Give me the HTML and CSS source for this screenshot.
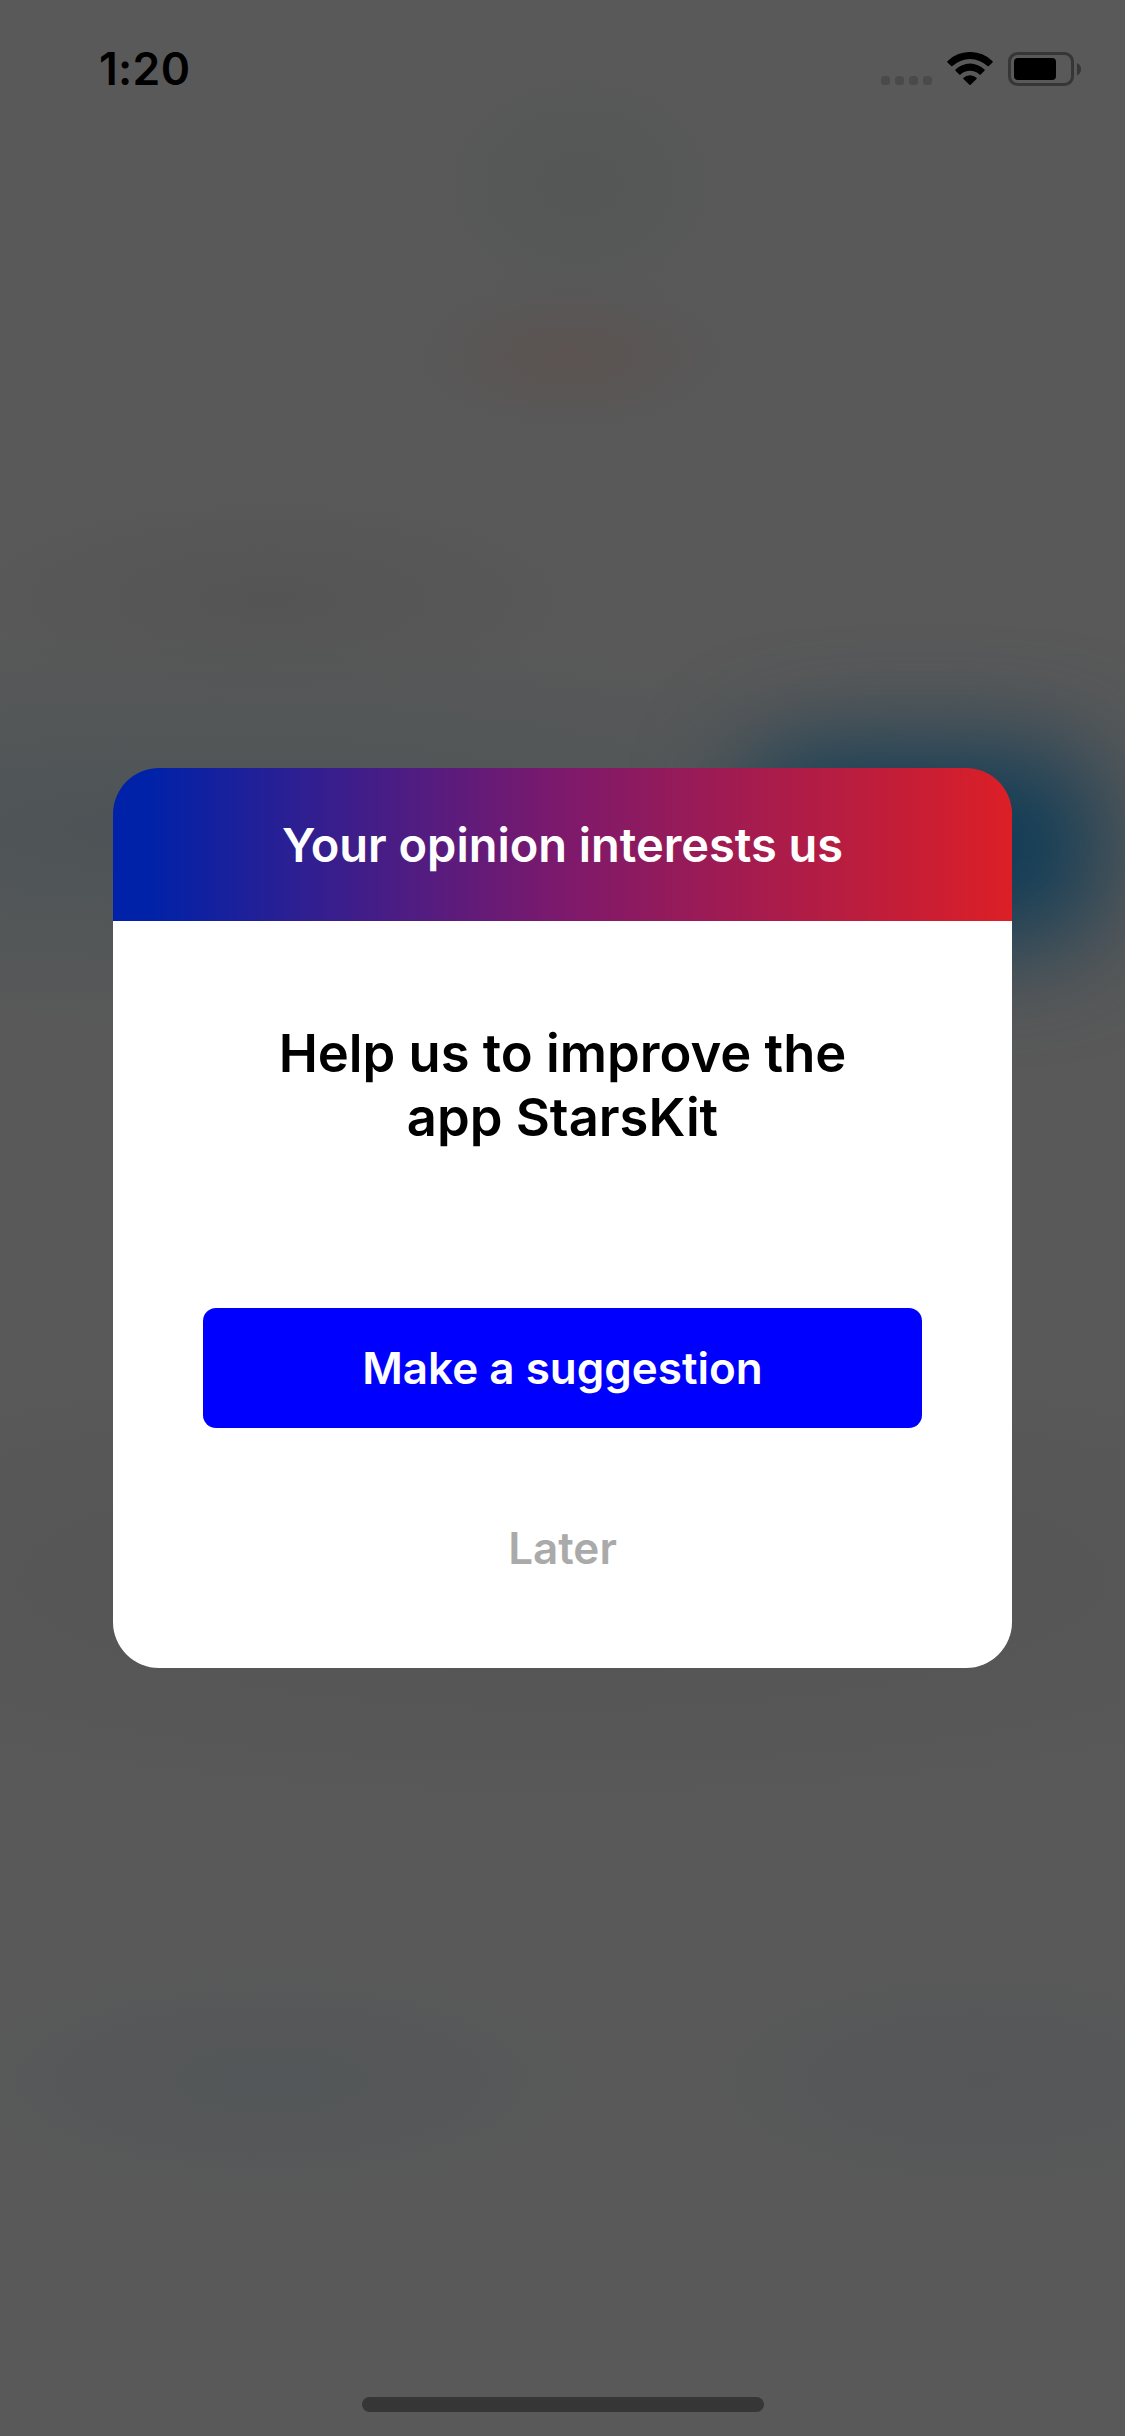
FILE: index.html
```html
<!DOCTYPE html>
<html lang="en">
<head>
<meta charset="utf-8">
<title>StarsKit</title>
<link rel="stylesheet" href="styles.css">
</head>
<body>
<div class="screen">
  <div class="glow"></div>
  <header class="status-bar">
    <span class="time">1:20</span>
    <div class="status-icons">
      <svg class="cellular" width="51" height="9" viewBox="0 0 51 9"><g fill="#4a4a4a"><rect width="9" height="9" rx="3.5"/><rect x="14" width="9" height="9" rx="3.5"/><rect x="28" width="9" height="9" rx="3.5"/><rect x="42" width="9" height="9" rx="3.5"/></g></svg>
      <svg class="wifi" width="46" height="33" viewBox="0 0 46 33"><path d="M0.4 9.2 A32.3 32.3 0 0 1 45.6 9.2 Q46 9.8 45.5 10.4 L41.8 14.1 Q41.2 14.6 40.6 14.1 A25.5 25.5 0 0 0 5.4 14.1 Q4.8 14.6 4.2 14.1 L0.5 10.4 Q0 9.8 0.4 9.2Z"/><path d="M8.5 17.5 A20.8 20.8 0 0 1 37.5 17.5 Q38 18.1 37.5 18.7 L33.7 22.4 Q33.1 22.9 32.5 22.4 A14 14 0 0 0 13.5 22.4 Q12.9 22.9 12.3 22.4 L8.5 18.7 Q8 18.1 8.5 17.5Z"/><path d="M16.5 25.8 A9.7 9.7 0 0 1 29.5 25.8 Q30 26.4 29.5 27 L23.6 32.7 Q23 33.2 22.4 32.7 L16.5 27 Q16 26.4 16.5 25.8Z"/></svg>
      <svg class="battery" width="73" height="34" viewBox="0 0 73 34"><rect x="1.5" y="1.5" width="63" height="31" rx="8" fill="none" stroke="#363636" stroke-width="3"/><rect x="6" y="6" width="42" height="22" rx="4"/><path d="M69 11 Q73 13 73 17.2 Q73 21.4 69 23.4Z" fill="#363636"/></svg>
    </div>
  </header>
  <main class="stage">
    <section class="dialog">
      <h1 class="dialog-header">Your opinion interests us</h1>
      <div class="dialog-body">
        <p class="message">Help us to improve the<br>app StarsKit</p>
        <button class="primary">Make a suggestion</button>
        <button class="secondary">Later</button>
      </div>
    </section>
  </main>
  <footer class="home"><div class="home-indicator"></div></footer>
</div>
</body>
</html>
```
FILE: styles.css
```css
* { box-sizing: border-box; }
body { margin: 0; font-family: Inter, "Liberation Sans", sans-serif; color: #000; }
.screen {
  position: relative; isolation: isolate;
  width: 1125px; height: 2436px; display: flex; flex-direction: column; overflow: hidden;
  background:
    radial-gradient(ellipse 210px 100px at 570px 355px, rgba(91,82,79,.85), rgba(89,87,87,.4) 65%, rgba(89,89,89,0)),
    radial-gradient(ellipse 160px 130px at 580px 185px, rgba(83,85,85,.8), rgba(89,89,89,0)),
    radial-gradient(ellipse 330px 110px at 270px 600px, rgba(83,83,83,.8), rgba(89,89,89,0)),
    radial-gradient(ellipse 900px 200px at 200px 830px, rgba(75,83,86,.9), rgba(89,89,89,0)),
    radial-gradient(ellipse 340px 120px at 270px 2080px, rgba(82,86,88,.9), rgba(89,89,89,0)),
    radial-gradient(ellipse 330px 130px at 980px 2080px, rgba(84,86,88,.9), rgba(89,89,89,0)),
    radial-gradient(ellipse 1000px 240px at 562px 1580px, rgba(82,82,82,.8), rgba(89,89,89,0)),
    #595959;
}
/* blurred app content showing through behind the dialog */
.glow { position: absolute; z-index: -1; left: 745px; top: 750px; width: 355px; height: 194px; border-radius: 60px; background: #0f3c57; filter: blur(52px); }
.status-bar { height: 132px; flex: none; display: flex; justify-content: space-between; align-items: flex-start; padding: 52px 44px 0 99px; }
.time { font-size: 44.5px; line-height: 34px; font-weight: 600; letter-spacing: .3px; }
.status-icons { display: flex; align-items: flex-start; }
.cellular { margin: 24px 15px 0 0; }
.wifi { margin-right: 15px; }
svg { display: block; }
.stage { flex: 1; display: flex; justify-content: center; padding-top: 636px; }
.dialog { width: 899px; height: 900px; border-radius: 46px; overflow: hidden; display: flex; flex-direction: column; }
.dialog-header { margin: 0; height: 153px; flex: none; display: flex; align-items: center; justify-content: center; background: linear-gradient(90deg, #0022a8 0%, #0022a8 4%, #7d196c 50%, #dc1f26 100%); color: #fff; font-size: 47px; font-weight: 600; letter-spacing: -.03px; white-space: pre; }
.dialog-body { flex: 1; background: #fff; display: flex; flex-direction: column; align-items: center; padding-top: 100px; }
.message { margin: 0; height: 128px; font-size: 52.5px; line-height: 64px; font-weight: 600; text-align: center; white-space: nowrap; }
.primary, .secondary { border: 0; width: 719px; height: 120px; font: 600 44px Inter, "Liberation Sans", sans-serif; padding: 0; }
.primary { margin-top: 159px; border-radius: 13px; background: #0000ff; color: #fff; }
.secondary { margin-top: 60px; background: none; color: #aaa; }
.home { height: 39px; flex: none; display: flex; justify-content: center; }
.home-indicator { width: 402px; height: 15px; border-radius: 8px; background: #363636; }
```
